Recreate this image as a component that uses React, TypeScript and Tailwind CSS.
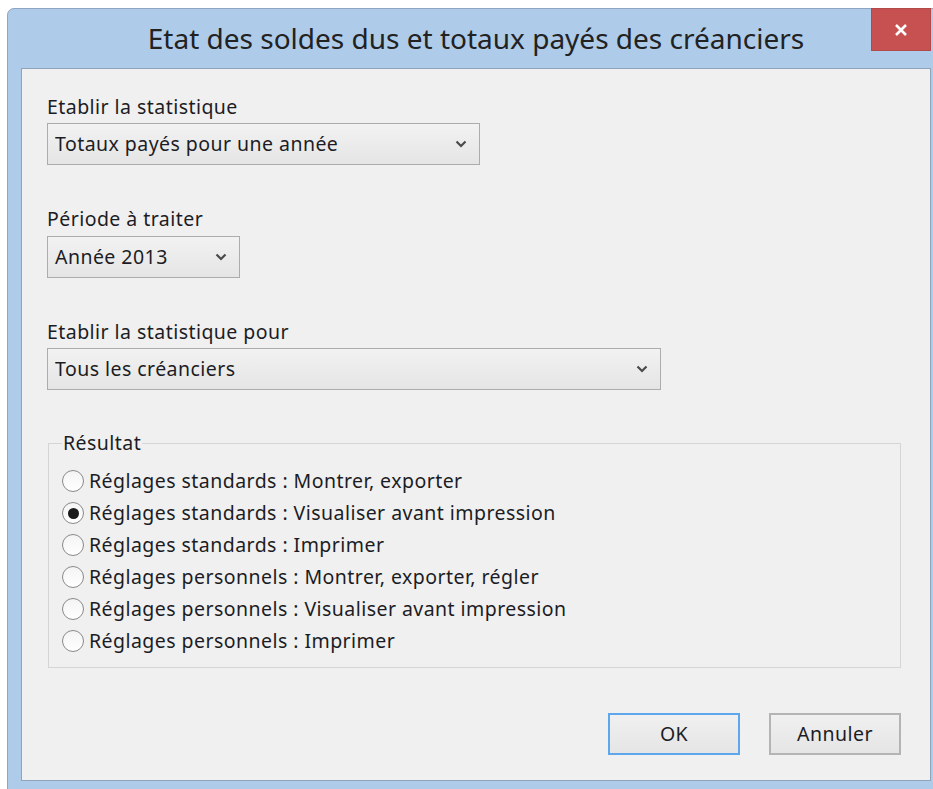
import React from "react";

const ink = "text-[#1c1c24]";
const body = "text-[19.5px] tracking-[0.45px]";

function Chevron() {
  return (
    <svg width="12" height="8" viewBox="0 0 12 8" className="shrink-0">
      <path d="M1.5 1.5 L6 6 L10.5 1.5" fill="none" stroke="#4a4a4a" strokeWidth="2.2" />
    </svg>
  );
}

function Combo({ value, width }: { value: string; width: string }) {
  return (
    <div
      className={`${width} h-[42px] flex items-center justify-between pl-[7px] pr-[12px] border border-[#acacac] bg-gradient-to-b from-[#f2f2f2] to-[#e5e5e5]`}
    >
      <span className={`${body} ${ink}`}>{value}</span>
      <Chevron />
    </div>
  );
}

function Radio({ label, checked }: { label: string; checked?: boolean }) {
  return (
    <div className="h-[32px] flex items-center">
      <span className="w-[22px] h-[22px] rounded-full border border-[#8a8a8a] bg-gradient-to-b from-[#f4f4f4] to-[#ffffff] flex items-center justify-center shrink-0">
        {checked && <span className="w-[11px] h-[11px] rounded-full bg-[#1a1a1a]" />}
      </span>
      <span className={`ml-[5px] ${body} ${ink}`}>{label}</span>
    </div>
  );
}

const results = [
  { label: "Réglages standards : Montrer, exporter" },
  { label: "Réglages standards : Visualiser avant impression", checked: true },
  { label: "Réglages standards : Imprimer" },
  { label: "Réglages personnels : Montrer, exporter, régler" },
  { label: "Réglages personnels : Visualiser avant impression" },
  { label: "Réglages personnels : Imprimer" },
];

export default function App() {
  return (
    <div
      className="w-[933px] h-[789px] bg-white overflow-hidden pl-[7px] pt-[8px]"
      style={{ fontFamily: '"Noto Sans", "Open Sans", sans-serif' }}
    >
      {/* window frame */}
      <div className="w-[938px] h-[800px] bg-[#aecbe9] border border-[#8ea6c2] rounded-tl-[7px] flex flex-col">
        {/* title bar */}
        <div className="relative h-[59px] flex items-center justify-center">
          <span className="text-[28px] text-[#222] -mt-[1px]">
            Etat des soldes dus et totaux payés des créanciers
          </span>
          <div className="absolute right-[13px] -top-px w-[60px] h-[43px] bg-[#c75050] border border-[#b24a4a] flex items-center justify-center">
            <svg width="14" height="14" viewBox="0 0 14 14">
              <path d="M2 2 L12 12 M12 2 L2 12" stroke="#fff" strokeWidth="2.6" />
            </svg>
          </div>
        </div>

        {/* client area */}
        <div className="ml-[13px] w-[910px] h-[713px] bg-[#f0f0f0] border border-[#8fa3ba] flex flex-col pl-[25px] pr-[29px]">
          <div className={`mt-[25px] h-[26px] leading-[26px] ${body} ${ink}`}>Etablir la statistique</div>
          <div className="mt-[3px]">
            <Combo value="Totaux payés pour une année" width="w-[433px]" />
          </div>

          <div className={`mt-[41px] h-[26px] leading-[26px] ${body} ${ink}`}>Période à traiter</div>
          <div className="mt-[4px]">
            <Combo value="Année 2013" width="w-[193px]" />
          </div>

          <div className={`mt-[41px] h-[26px] leading-[26px] ${body} ${ink}`}>Etablir la statistique pour</div>
          <div className="mt-[3px]">
            <Combo value="Tous les créanciers" width="w-[614px]" />
          </div>

          {/* Résultat group */}
          <fieldset className="mt-[42px] ml-px w-[853px] h-[236px] border border-[#d5d5d5] pl-[13px] pt-[11px]">
            <legend className={`px-[1px] ml-0 leading-[22px] ${body} ${ink}`}>Résultat</legend>
            {results.map((r, i) => (
              <Radio key={i} label={r.label} checked={r.checked} />
            ))}
          </fieldset>

          {/* buttons */}
          <div className="mt-[45px] flex justify-end gap-[29px]">
            <button className={`w-[132px] h-[42px] border-2 border-[#5fa7ec] bg-gradient-to-b from-[#f0f0f0] to-[#e5e5e5] ${body} ${ink}`}>
              OK
            </button>
            <button className={`w-[132px] h-[42px] border-2 border-[#b4b4b4] bg-gradient-to-b from-[#f0f0f0] to-[#e5e5e5] ${body} ${ink}`}>
              Annuler
            </button>
          </div>
        </div>
      </div>
    </div>
  );
}
